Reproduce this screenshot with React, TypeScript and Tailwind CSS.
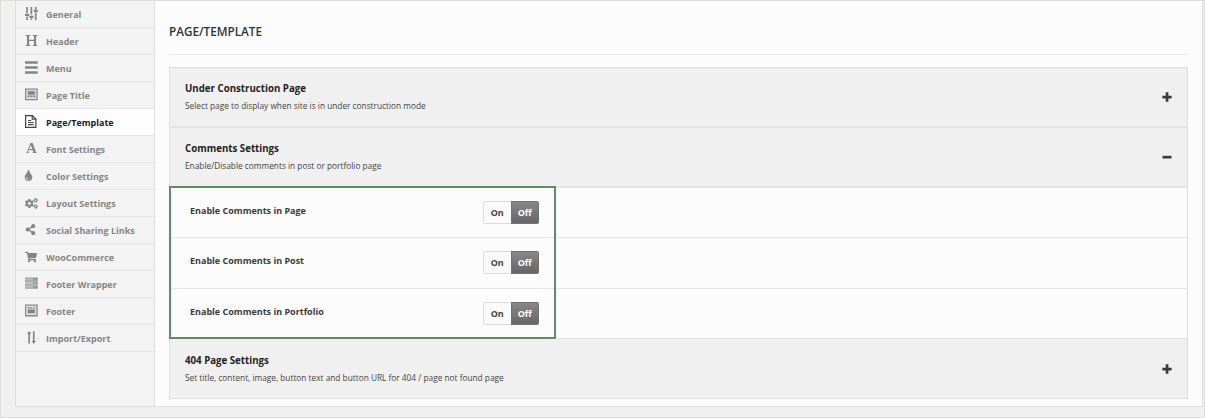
import type { ReactNode } from 'react';
import { FaCogs, FaShareAlt, FaShoppingCart, FaTint } from 'react-icons/fa';

const Sliders = () => (
  <svg width="13" height="13" viewBox="0 0 13 13" fill="currentColor">
    <path d="M1.200 0h1.700v6H1.200zM1.200 9.500h1.700V13H1.200zM0 6.800h4.100v2.200H0zM5.500 0h1.700v7.600H5.500zM5.500 11.500h1.700V13H5.500zM4.300 8.800h4.100V11H4.300zM9.900 0h1.700v2.400H9.900zM9.900 5.500h1.700V13H9.900zM8.700 2.800h4.100V5H8.700z" />
  </svg>
);

const HeaderIcon = () => (
  <svg width="13" height="13" viewBox="0 0 13 13" fill="currentColor">
    <path d="M.7 1h4.700v.8l-1.300.4v3.600h4.900V2.200l-1.300-.4V1h4.700v.8l-1.300.4v8.600l1.300.4v.8H7.700v-.8l1.300-.4V6.900H4.100v3.900l1.300.4v.8H.7v-.8l1.300-.4V2.200L.7 1.800z" />
  </svg>
);

const MenuIcon = () => (
  <svg width="13" height="13" viewBox="0 0 13 13" fill="currentColor">
    <path d="M0 .2h12.700v2.600H0zM0 5.200h12.700v2.600H0zM0 10.200h12.700v2.600H0z" />
  </svg>
);

const PageTitleIcon = () => (
  <svg width="13" height="13" viewBox="0 0 13 13" fill="currentColor">
    <path fillRule="evenodd" d="M0 .5h12.700v11.800H0zM1.300 1.800v9.200h10.100V1.800z" />
    <path d="M3 3.200h6.800v3.400H3z" />
    <path d="M2.600 7.600h1.700v1.500H2.600zM5.400 7.600h1.900v1.500H5.400zM8.400 7.600h1.700v1.500H8.400z" />
    <path opacity=".35" d="M2 2.500h8.700v7.800H2z" />
  </svg>
);

const DocumentIcon = () => (
  <svg width="13" height="13" viewBox="0 0 13 13" fill="none" stroke="#444" strokeWidth="1.200">
    <path d="M.6.6h6.800l3.500 3.300v8.500H.6zM7.200.8v3.300h3.500M3 5.500h3.200M3 7.500h5.600M3 9.600h5.600" />
  </svg>
);

const FontIcon = () => <span className="w-[13px] text-center font-['Liberation_Serif',serif] text-[15px] leading-[13px] font-bold">A</span>;

const ServerIcon = () => (
  <svg width="13" height="13" viewBox="0 0 13 13" fill="currentColor">
    <path opacity=".45" d="M0 .8h12.700v3H0zM0 4.600h12.700v3H0zM0 8.400h12.700v3H0z" />
    <path d="M0 .8h12.700v.7H0zM0 3.200h12.700v.6H0zM0 4.600h12.700v.5H0zM0 7h12.700v.6H0zM0 8.400h12.700v.5H0zM0 10.800h12.700v.7H0zM8.300 1.500h1.200v1.700H8.300zM10.500 1.500h1.800v1.700h-1.800zM8.300 5.300h1.200V7H8.300zM10.500 5.300h1.800V7h-1.800zM8.300 9.100h1.200v1.700H8.300zM10.500 9.100h1.800v1.700h-1.800z" />
  </svg>
);

const FooterIcon = () => (
  <svg width="13" height="13" viewBox="0 0 13 13" fill="currentColor">
    <path fillRule="evenodd" d="M0 .4h12.700v12H0zM1.300 1.700v9.400h10.100V1.700z" />
    <path d="M2.900 3h1.500v1.500H2.900zM5.500 3H7v1.500H5.500zM8.200 3h1.500v1.500H8.200zM2.900 5.600h6.900v3.700H2.900z" />
    <path opacity=".3" d="M2 2.500h8.700v7.800H2z" />
  </svg>
);

const TransferIcon = () => (
  <svg width="13" height="13" viewBox="0 0 13 13" fill="currentColor">
    <path d="M4.200 0l2.100 3H5v9.600H3.300V3H2.100zM8.800 13l-2.100-3h1.200V.2h1.700V10h1.300z" />
  </svg>
);

const menu: { label: string; icon: ReactNode; active?: boolean }[] = [
  { label: 'General', icon: <Sliders /> },
  { label: 'Header', icon: <HeaderIcon /> },
  { label: 'Menu', icon: <MenuIcon /> },
  { label: 'Page Title', icon: <PageTitleIcon /> },
  { label: 'Page/Template', icon: <DocumentIcon />, active: true },
  { label: 'Font Settings', icon: <FontIcon /> },
  { label: 'Color Settings', icon: <FaTint size={11} className="-ml-[2px]" /> },
  { label: 'Layout Settings', icon: <FaCogs size={13} className="mt-[2px]" /> },
  { label: 'Social Sharing Links', icon: <FaShareAlt size={11} /> },
  { label: 'WooCommerce', icon: <FaShoppingCart size={12} /> },
  { label: 'Footer Wrapper', icon: <ServerIcon /> },
  { label: 'Footer', icon: <FooterIcon /> },
  { label: 'Import/Export', icon: <TransferIcon /> },
];

const options = ['Enable Comments in Page', 'Enable Comments in Post', 'Enable Comments in Portfolio'];

function Toggle() {
  return (
    <div className="flex h-[23px] w-14 overflow-hidden rounded-[2px] text-[9px] leading-3 font-bold">
      <button className="flex flex-1 items-center justify-center rounded-l-[2px] border border-r-0 border-[#dcdcdc] bg-[#fafafa] pt-px text-[#444]">On</button>
      <button className="flex flex-1 items-center justify-center border border-[#727272] bg-linear-to-b from-[#888] to-[#666] pt-px text-white">Off</button>
    </div>
  );
}

function SectionHeader({ title, text, open = false }: { title: string; text: string; open?: boolean }) {
  return (
    <div className="flex h-full items-center justify-between bg-[#f0f0f0] px-[15px]">
      <div>
        <h2 className="text-[9.7px] leading-[17px] font-bold text-[#222]">{title}</h2>
        <p className="text-[8.3px] leading-[17px] text-[#444]">{text}</p>
      </div>
      <svg width="10" height="10" viewBox="0 0 10 10" fill="#3a3a3a">
        <path d={open ? 'M.5 3.800h9v2.700h-9z' : 'M3.700.3h2.700v3.400h3.200v2.700H6.400v3.300H3.700V6.400H.4V3.700h3.300z'} />
      </svg>
    </div>
  );
}

export default function App() {
  return (
    <div className="flex h-[418px] w-[1205px] border border-[#dcdcd8] bg-[#f0f0f0] pr-[1px] pb-[10px] pl-[14px] font-['Open_Sans',sans-serif]">
      <div className="flex flex-1 border-r border-b border-l border-[#dedede] bg-[#fcfcfc]">
        <nav className="w-[139px] border-r border-[#dedede] bg-[#f3f3f3]">
          {menu.map(({ label, icon, active }) => (
            <a
              key={label}
              className={
                active
                  ? 'flex h-[27px] items-center border-b border-[#e8e8e8] bg-[#fdfdfd] pl-[9px] text-[#222]'
                  : 'flex h-[27px] items-center border-b border-[#e8e8e8] pl-[9px] text-[#858585]'
              }
            >
              <span className="mb-px flex w-[21px] shrink-0">{icon}</span>
              <span className="pt-px text-[9px] leading-3 font-bold">{label}</span>
            </a>
          ))}
        </nav>
        <main className="flex-1 px-[14px]">
          <h1 className="flex h-[54px] items-center border-b border-[#e8e8e8] pt-[9px] text-[11.72px] font-semibold text-[#333]">PAGE/TEMPLATE</h1>
          <div className="mt-3 border border-[#dedede]">
            <div className="h-[58px]">
              <SectionHeader title="Under Construction Page" text="Select page to display when site is in under construction mode" />
            </div>
            <div className="h-[60px] border-t-2 border-[#e2e2e2]">
              <SectionHeader title="Comments Settings" text="Enable/Disable comments in post or portfolio page" open />
            </div>
            <div className="relative h-[153px] border-t-2 border-b border-[#e4e4e4]">
              {options.map((label, i) => (
                <div key={label} className={i === 0 ? 'flex h-[49px] pl-[20px]' : 'flex h-[51px] border-t border-[#e6e6e6] pl-[20px]'}>
                  <span className="w-[293px] pt-[17px] text-[9px] leading-3 font-bold text-[#3a3a3a]">{label}</span>
                  <div className="pt-[13px]">
                    <Toggle />
                  </div>
                </div>
              ))}
              <div className="pointer-events-none absolute -top-[2px] -left-px h-[153px] w-[387px] border-2 border-[#5c8d69]" />
            </div>
            <div className="h-[59px]">
              <SectionHeader title="404 Page Settings" text="Set title, content, image, button text and button URL for 404 / page not found page" />
            </div>
          </div>
        </main>
      </div>
    </div>
  );
}
